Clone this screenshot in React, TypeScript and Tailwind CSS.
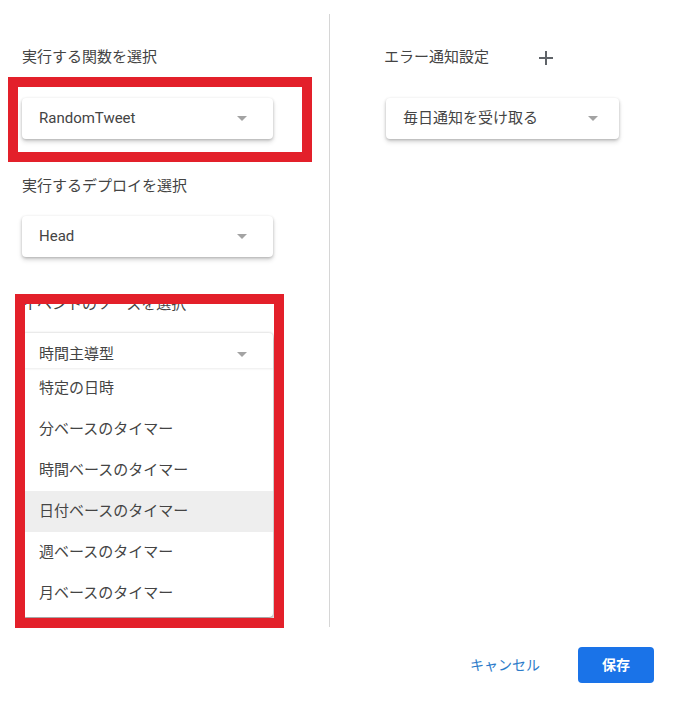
import React from 'react';

// small grey caret used on every select
function Caret() {
  return (
    <svg width="10" height="5" viewBox="0 0 10 5" className="shrink-0">
      <path d="M0 0h10L5 5z" fill="#a3a3a3" />
    </svg>
  );
}

function SelectBox({ value, width, caretPad }: { value: string; width: string; caretPad: string }) {
  return (
    <div
      className={`${width} h-[41px] flex items-center justify-between pl-[17px] ${caretPad} bg-white rounded-[4px] shadow-[0_1px_3px_rgba(0,0,0,0.22),0_3px_5px_rgba(0,0,0,0.14)]`}
    >
      <span className="text-[15px] text-[#444444]">{value}</span>
      <Caret />
    </div>
  );
}

const menuItems = ['特定の日時', '分ベースのタイマー', '時間ベースのタイマー', '日付ベースのタイマー', '週ベースのタイマー', '月ベースのタイマー'];

export default function App() {
  return (
    <div className="w-[689px] h-[716px] bg-white font-['Roboto','Noto_Sans_CJK_JP',sans-serif] text-[#444444] overflow-hidden">
      <div className="flex pt-[14px]">
        {/* left column */}
        <div className="relative w-[330px] border-r border-[#d6d6d6] pl-[22px] pt-[33px] pb-[10px]">
          <div className="text-[15px] leading-[20px]">実行する関数を選択</div>
          <div className="mt-[31px]">
            <SelectBox value="RandomTweet" width="w-[251px]" caretPad="pr-[26px]" />
          </div>

          <div className="mt-[37px] text-[15px] leading-[20px]">実行するデプロイを選択</div>
          <div className="mt-[20px]">
            <SelectBox value="Head" width="w-[251px]" caretPad="pr-[26px]" />
          </div>

          <div className="mt-[37px] text-[15px] leading-[20px]">イベントのソースを選択</div>

          {/* opened menu */}
          <div className="mt-[19px] w-[251px] bg-white rounded-[4px] shadow-[0_0_3px_rgba(0,0,0,0.18),0_3px_4px_rgba(0,0,0,0.35)]">
            <div className="h-[35px] flex items-center justify-between pt-[8px] pl-[17px] pr-[26px] shadow-[0_1px_2px_rgba(0,0,0,0.08)]">
              <span className="text-[15px]">時間主導型</span>
              <Caret />
            </div>
            <ul className="pb-[3px]">
              {menuItems.map((item) => (
                <li
                  key={item}
                  className={`h-[41px] flex items-center pl-[17px] text-[15px] ${item === '日付ベースのタイマー' ? 'bg-[#eeeeee]' : ''}`}
                >
                  {item}
                </li>
              ))}
            </ul>
          </div>

          {/* red annotation boxes */}
          <div className="pointer-events-none absolute left-[8px] top-[63px] w-[304px] h-[85px] border-[10px] border-[#e3202a]" />
          <div className="pointer-events-none absolute left-[15px] top-[280px] w-[269px] h-[334px] border-[10px] border-[#e3202a]" />
        </div>

        {/* right column */}
        <div className="pl-[54px] pt-[33px]">
          <div className="flex items-center">
            <span className="text-[15px] leading-[20px]">エラー通知設定</span>
            <svg width="14" height="14" viewBox="0 0 14 14" className="ml-[50px] mt-[2px]">
              <path d="M7 0v14M0 7h14" stroke="#5f6368" strokeWidth="2" />
            </svg>
          </div>
          <div className="mt-[31px] ml-[2px]">
            <SelectBox value="毎日通知を受け取る" width="w-[233px]" caretPad="pr-[21px]" />
          </div>
        </div>
      </div>

      {/* footer buttons */}
      <div className="flex justify-end items-center gap-[38px] pr-[35px] mt-[20px]">
        <button className="text-[14px] text-[#2b7bc9]">キャンセル</button>
        <button className="w-[76px] h-[36px] rounded-[4px] bg-[#1a73e8] text-white text-[14px] font-bold">保存</button>
      </div>
    </div>
  );
}
